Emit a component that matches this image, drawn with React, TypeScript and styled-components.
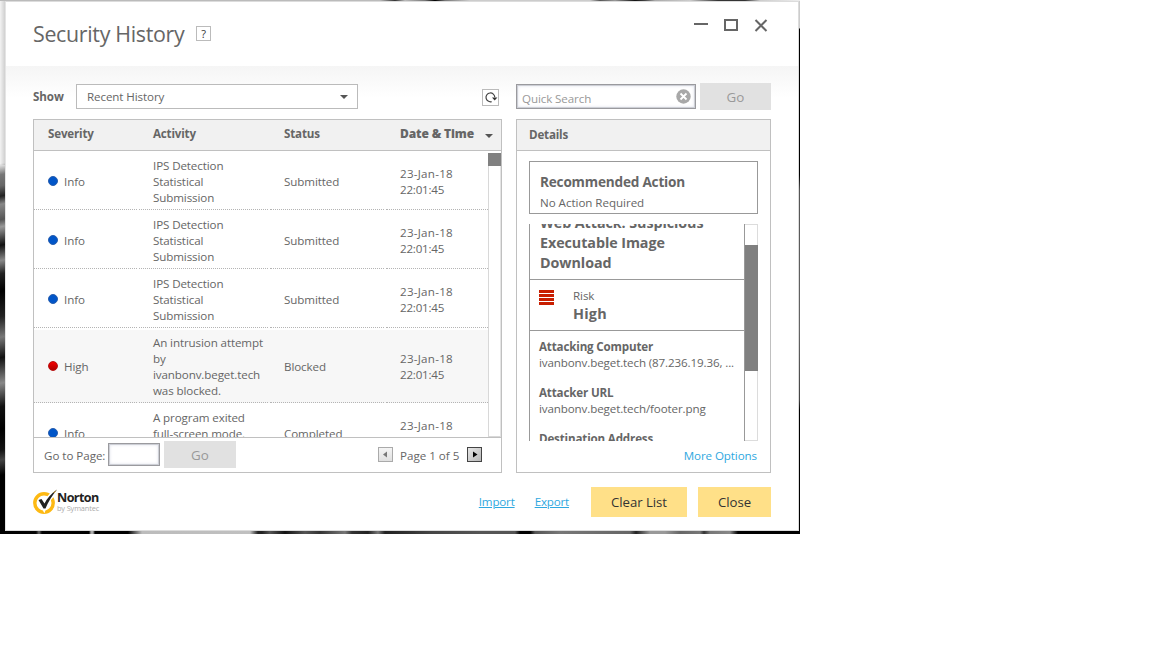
import React from "react";
import styled, { createGlobalStyle, css } from "styled-components";

const Global = createGlobalStyle`
  * { box-sizing: border-box; }
  html, body { margin: 0; background: #fff; }
  body {
    font-family: "Open Sans", "Noto Sans", sans-serif;
    font-size: 11.6px;
    line-height: 16px;
    letter-spacing: -0.1px;
    color: #666;
  }
  button, input { font: inherit; letter-spacing: inherit; color: inherit; margin: 0; border-radius: 0; outline: none; }
`;

const Desktop = styled.div`
  width: 800px;
  height: 534px;
  padding: 1px 1px 3px 5px;
  background:
    linear-gradient(90deg, #bbb 0, #bbb 380px, #333 395px, #bbb 405px, #777 425px, #000 435px, #777 445px, #ccc 470px, #ccc 590px, #555 600px, #999 615px, #111 635px, #444 645px, #aaa 655px, #ccc 690px, #333 718px, #333 745px, #ccc 760px, #eee 800px) 0 0 / 800px 1px no-repeat,
    linear-gradient(180deg, #ccc 0, #ccc 28px, #000 29px, #000 175px, #555 190px, #666 330px, #444 400px, #000 410px, #000 534px) 799px 0 / 1px 531px no-repeat,
    linear-gradient(90deg, transparent 0, rgba(0, 0, 0, 0.14) 5px) 0 0 / 5px 165px no-repeat,
    linear-gradient(168deg, #f2f2f2 0, #f2f2f2 160px, #777 171px, #666 182px, #222 192px, #888 200px, #555 215px, #999 222px, #111 240px, #888 255px, #222 268px, #000 285px, #222 310px, #777 330px, #111 350px, #888 375px, #111 398px, #000 420px, #111 440px, #444 450px, #000 465px, #000 534px) 0 0 / 5px 534px no-repeat,
    linear-gradient(90deg, #000 0, #050505 36px, #666 39px, #020202 42px, #000 89px, #aaa 91px, #aaa 93px, #000 95px, #000 128px, #555 134px, #bcbcbc 142px, #c0c0c0 250px, #222 258px, #222 262px, #555 270px, #111 285px, #555 305px, #333 320px, #777 345px, #333 352px, #222 368px, #777 378px, #222 385px, #333 410px, #444 430px, #555 480px, #555 515px, #000 520px, #000 530px, #555 535px, #777 560px, #666 630px, #222 636px, #999 650px, #999 665px, #666 680px, #777 700px, #333 704px, #777 710px, #888 730px, #000 738px, #000 800px) 0 531px / 800px 3px no-repeat;
`;

const Window = styled.main`
  height: 530px;
  display: flex;
  flex-direction: column;
  background: #fff;
  border: 1px solid #dcdcdc;
  border-left-color: #e4e4e4;
`;

const TitleBar = styled.header`
  height: 64px;
  flex: none;
  display: flex;
  align-items: flex-start;
  padding: 15px 30px 0 27px;
`;

const Title = styled.h1`
  margin: 0;
  padding-top: 1px;
  width: 163px;
  font-size: 21.4px;
  font-weight: 400;
  line-height: 32px;
  letter-spacing: -0.32px;
  white-space: nowrap;
`;

const HelpButton = styled.button`
  width: 15px;
  height: 15px;
  margin-top: 9px;
  padding: 0;
  background: #fff;
  border: 1px solid #bbb;
  color: #333;
  font-size: 11px;
  line-height: 13px;
`;

const WindowControls = styled.div`
  margin-left: auto;
  padding-top: 1px;
  display: flex;
  svg { display: block; }
`;

const Body = styled.div`
  flex: 1;
  padding: 17px 27px 0 27px;
  background: linear-gradient(#f5f5f5, #fff 32px);
`;

const Toolbar = styled.div`
  height: 27px;
  display: flex;
  align-items: center;
`;

const ShowLabel = styled.label`
  width: 43px;
  font-weight: 700;
  white-space: nowrap;
`;

const Select = styled.div`
  width: 282px;
  height: 25px;
  display: flex;
  align-items: center;
  justify-content: space-between;
  padding: 0 9px 0 10px;
  border: 1px solid #bbb;
  background: #fff;
`;

const Caret = styled.span`
  border: 4px solid transparent;
  border-top-color: #555;
  border-bottom: 0;
`;

const RefreshButton = styled.button`
  width: 17px;
  height: 17px;
  margin: 2px 17px 0 124px;
  padding: 0;
  border: 1px solid #bbb;
  background: #fff;
  svg { display: block; }
`;

const inset = css`
  border: 1px solid #9a9a9e;
  box-shadow: inset 0 0 0 1px #cdcfd6, inset 0 0 3px 1px #dfe2ec;
  background: #fff;
`;

const SearchBox = styled.div`
  ${inset}
  width: 180px;
  height: 25px;
  display: flex;
  align-items: center;
  justify-content: space-between;
  padding: 0 4px 0 5px;
  color: #999;
  span { padding-top: 4px; }
`;

const GoButton = styled.button<{ $width: number }>`
  width: ${(p) => p.$width}px;
  height: 27px;
  margin-left: 4px;
  padding: 1px 0 0;
  border: 0;
  background: #e1e1e1;
  color: #999;
  font-size: 13.4px;
  letter-spacing: 0;
`;

const Panels = styled.div`
  height: 354px;
  margin-top: 9px;
  display: grid;
  grid-template-columns: 469px 255px;
  column-gap: 14px;
`;

const Panel = styled.section`
  min-height: 0;
  display: flex;
  flex-direction: column;
  border: 1px solid #c0c0c0;
  background: #fff;
`;

const columns = css`
  display: grid;
  grid-template-columns: 105px 131px 116px 102px;
`;

const PanelHeader = styled.div`
  height: 31px;
  flex: none;
  padding: 7px 0 0 12px;
  border-bottom: 1px solid #c0c0c0;
  background: #f1f1f1;
  font-weight: 700;
  letter-spacing: -0.18px;
`;

const TableHeader = styled(PanelHeader)`
  ${columns}
  padding: 6px 0 0;
  span { padding-left: 14px; white-space: nowrap; }
`;

const SortCell = styled.div`
  display: flex;
  align-items: center;
  height: 16px;
  i { margin: 4px 0 0 14px; }
  b { width: 86px; padding-left: 14px; white-space: nowrap; font-size: 12px; letter-spacing: -0.14px; }
  i { margin-left: 13px; }
`;

const TableArea = styled.div`
  height: 287px;
  display: flex;
  border-bottom: 1px solid #c0c0c0;
`;

const Rows = styled.div`
  width: 454px;
  height: 286px;
  overflow: hidden;
`;

const Row = styled.div<{ $height: number; $shaded?: boolean }>`
  ${columns}
  height: ${(p) => p.$height}px;
  background: ${(p) => (p.$shaded ? "linear-gradient(#fff 2px, #f7f7f7 2px)" : "#fff")};
`;

const Cell = styled.div<{ $ls?: number }>`
  display: flex;
  align-items: center;
  margin-right: 2px;
  padding: 4px 0 0 14px;
  border-bottom: 1px dotted #b4b4b4;
  white-space: pre;
  letter-spacing: ${(p) => p.$ls ?? -0.1}px;
  &:last-child { margin-right: 0; }
`;

const DateText = styled.div`
  letter-spacing: 0.25px;
  span { display: block; }
  span + span { letter-spacing: -0.22px; }
`;

const Dot = styled.i<{ $high?: boolean }>`
  width: 10px;
  height: 10px;
  margin: -3px 6px 0 0;
  border-radius: 50%;
  border: 1px solid ${(p) => (p.$high ? "#b81010" : "#2a5fae")};
  background: ${(p) => (p.$high ? "linear-gradient(#f40000, #b00000)" : "#0055c8")};
`;

const TableScroll = styled.div`
  width: 13px;
  height: 284px;
  margin-top: 2px;
  border: 1px solid #d8d8d8;
  border-top: 0;
  border-right-color: #e4e4e4;
  background: #fff;
  &::before { content: ""; display: block; height: 13px; margin: 0 -1px; background: #808080; }
`;

const Pager = styled.div`
  flex: 1;
  display: flex;
  align-items: center;
  padding: 0 19px 2px 10px;
  > span { padding-top: 3px; white-space: nowrap; letter-spacing: -0.04px; }
  > span:first-child { width: 64px; }
`;

const PageInput = styled.div`
  ${inset}
  width: 52px;
  height: 23px;
`;

const PageButton = styled.button<{ $off?: boolean }>`
  width: 15px;
  height: 15px;
  padding: 0;
  border: 1px solid ${(p) => (p.$off ? "#aaa" : "#444")};
  background: ${(p) => (p.$off ? "linear-gradient(#f4f4f4, #e0e0e0)" : "linear-gradient(135deg, #e6e6e6, #b8b8b8)")};
  svg { display: block; }
`;

const PageNav = styled.div`
  margin-left: auto;
  display: flex;
  align-items: center;
  span { width: 74px; padding: 3px 0 0 7px; letter-spacing: 0; }
`;

const ActionCard = styled.div`
  height: 53px;
  margin: 10px 12px 0;
  padding: 10px 10px 0;
  border: 1px solid #999;
  strong { display: block; font-size: 13.6px; line-height: 20px; letter-spacing: -0.2px; }
  span { display: block; line-height: 16px; padding-top: 3px; letter-spacing: -0.04px; }
`;

const DetailScroll = styled.div`
  height: 217px;
  margin: 10px 12px 0;
  display: flex;
  overflow: hidden;
`;

const DetailContent = styled.div`
  width: 216px;
  height: 217px;
  display: flex;
  flex-direction: column;
  justify-content: flex-end;
  overflow: hidden;
  border: solid #999;
  border-width: 0 1px;
`;

const AttackName = styled.h2`
  margin: 0;
  flex: none;
  height: 67px;
  padding-left: 10px;
  border-bottom: 1px solid #999;
  font-size: 14.3px;
  line-height: 20px;
  letter-spacing: -0.06px;
  white-space: pre;
`;

const RiskRow = styled.div`
  flex: none;
  height: 51px;
  display: flex;
  padding: 8px 0 0 9px;
  border-bottom: 1px solid #999;
  div { padding-left: 19px; }
  span { display: block; }
  strong { display: block; font-size: 14.4px; line-height: 20px; letter-spacing: 0.2px; }
`;

const RiskBars = styled.i`
  width: 15px;
  height: 15px;
  margin-top: 2px;
  background: repeating-linear-gradient(#c81e00 0 3px, #fff 3px 4px);
`;

const Facts = styled.dl`
  margin: 0;
  flex: none;
  height: 110px;
  padding: 8px 0 0 9px;
  overflow: hidden;
  white-space: nowrap;
  dt { font-weight: 700; letter-spacing: -0.16px; }
  dd { margin: 0 0 14px; letter-spacing: -0.12px; }
`;

const DetailTrack = styled.div`
  width: 13px;
  border: solid #dcdcdc;
  border-width: 1px 1px 1px 0;
  &::before { content: ""; display: block; width: 13px; height: 126px; margin-top: 20px; background: #808080; }
`;

const MoreOptions = styled.a`
  align-self: flex-end;
  margin: 7px 13px 0 0;
  color: #2fa8e0;
`;

const Footer = styled.footer`
  height: 30px;
  margin-top: 14px;
  display: flex;
  align-items: center;
`;

const Logo = styled.div`
  display: flex;
  align-items: flex-start;
  svg { display: block; }
`;

const LogoText = styled.div`
  margin: 4px 0 0 -4px;
  white-space: nowrap;
  strong { display: block; color: #222; font-size: 12.6px; line-height: 12px; letter-spacing: -0.6px; }
  span { display: block; color: #aaa; font-size: 7.4px; line-height: 8px; letter-spacing: -0.15px; }
`;

const TextLinks = styled.nav`
  margin-left: auto;
  display: flex;
  gap: 20px;
  margin-right: 22px;
  a { color: #2fa8e0; text-decoration: underline; letter-spacing: -0.18px; }
`;

const YellowButton = styled.button<{ $width: number }>`
  width: ${(p) => p.$width}px;
  height: 30px;
  padding: 0;
  border: 0;
  background: #ffe088;
  color: #333;
  font-size: 13.2px;
  letter-spacing: -0.05px;
  & + & { margin-left: 11px; }
`;

const rows = [
  { level: "Info", text: "IPS Detection\nStatistical\nSubmission", status: "Submitted", height: 59 },
  { level: "Info", text: "IPS Detection\nStatistical\nSubmission", status: "Submitted", height: 59 },
  { level: "Info", text: "IPS Detection\nStatistical\nSubmission", status: "Submitted", height: 59 },
  { level: "High", text: "An intrusion attempt\nby\nivanbonv.beget.tech\nwas blocked.", status: "Blocked", height: 75 },
  { level: "Info", text: "A program exited\nfull-screen mode.\n ", status: "Completed", height: 59 },
];

export default function App() {
  return (
    <>
      <Global />
      <Desktop>
        <Window>
          <TitleBar>
            <Title>Security History</Title>
            <HelpButton>?</HelpButton>
            <WindowControls>
              <svg width="74" height="15" viewBox="0 0 74 15" fill="none" stroke="#666" strokeWidth="2">
                <path d="M0 6H14M61.5 2L72.5 13M72.5 2L61.5 13" />
                <path d="M31 2H43V12H31Z" />
              </svg>
            </WindowControls>
          </TitleBar>
          <Body>
            <Toolbar>
              <ShowLabel>Show</ShowLabel>
              <Select>
                Recent History
                <Caret />
              </Select>
              <RefreshButton>
                <svg width="15" height="15" viewBox="0 0 15 15" fill="none">
                  <path d="M8.6 11.6A4.4 4.4 0 1 1 11.8 7.3" stroke="#444" strokeWidth="1.2" />
                  <path d="M9 7.5H14.4L11.7 10.6Z" fill="#333" />
                </svg>
              </RefreshButton>
              <SearchBox>
                <span>Quick Search</span>
                <svg width="15" height="15" viewBox="0 0 15 15">
                  <circle cx="7.5" cy="7.5" r="7.2" fill="#a8a8a8" />
                  <path d="M4.5 4.5L10.5 10.5M10.5 4.5L4.5 10.5" stroke="#fff" strokeWidth="1.8" />
                </svg>
              </SearchBox>
              <GoButton $width={71}>Go</GoButton>
            </Toolbar>
            <Panels>
              <Panel>
                <TableHeader>
                  <span>Severity</span>
                  <span>Activity</span>
                  <span>Status</span>
                  <SortCell>
                    <b>Date &amp; Time</b>
                    <Caret as="i" />
                  </SortCell>
                </TableHeader>
                <TableArea>
                  <Rows>
                    {rows.map((r, i) => (
                      <Row key={i} $height={r.height} $shaded={r.level === "High"}>
                        <Cell>
                          <Dot $high={r.level === "High"} />
                          {r.level}
                        </Cell>
                        <Cell $ls={-0.11}>{r.text}</Cell>
                        <Cell>{r.status}</Cell>
                        <Cell>
                          <DateText>
                            <span>23-Jan-18</span>
                            <span>22:01:45</span>
                          </DateText>
                        </Cell>
                      </Row>
                    ))}
                  </Rows>
                  <TableScroll />
                </TableArea>
                <Pager>
                  <span>Go to Page:</span>
                  <PageInput />
                  <GoButton $width={72}>Go</GoButton>
                  <PageNav>
                    <PageButton $off>
                      <svg width="13" height="13" viewBox="0 0 13 13"><path d="M8 3.5V9.5L4 6.5Z" fill="#777" /></svg>
                    </PageButton>
                    <span>Page 1 of 5</span>
                    <PageButton>
                      <svg width="13" height="13" viewBox="0 0 13 13"><path d="M5 3.5V9.5L9.5 6.5Z" fill="#000" /></svg>
                    </PageButton>
                  </PageNav>
                </Pager>
              </Panel>
              <Panel>
                <PanelHeader>Details</PanelHeader>
                <ActionCard>
                  <strong>Recommended Action</strong>
                  <span>No Action Required</span>
                </ActionCard>
                <DetailScroll>
                  <DetailContent>
                    <AttackName>{"Web Attack: Suspicious\nExecutable Image\nDownload"}</AttackName>
                    <RiskRow>
                      <RiskBars />
                      <div>
                        <span>Risk</span>
                        <strong>High</strong>
                      </div>
                    </RiskRow>
                    <Facts>
                      <dt>Attacking Computer</dt>
                      <dd>ivanbonv.beget.tech (87.236.19.36, ...</dd>
                      <dt>Attacker URL</dt>
                      <dd>ivanbonv.beget.tech/footer.png</dd>
                      <dt>Destination Address</dt>
                    </Facts>
                  </DetailContent>
                  <DetailTrack />
                </DetailScroll>
                <MoreOptions>More Options</MoreOptions>
              </Panel>
            </Panels>
            <Footer>
              <Logo>
                <svg width="28" height="28" viewBox="0 0 28 28" fill="none">
                  <circle cx="11" cy="15" r="9.2" stroke="#fdb913" strokeWidth="3.4" />
                  <path d="M7 12.5L11 19.5C14 12 18 7 24 2" stroke="#fff" strokeWidth="5" />
                  <path d="M5.5 12L8.5 11L11.5 15.5C14 10.5 18 5.5 24 1.5C19 8 15 14 12.5 20.5H10.5Z" fill="#222" />
                  <path d="M20 5L24 1.5L21.5 5Z" fill="#c9932b" />
                </svg>
                <LogoText>
                  <strong>Norton</strong>
                  <span>by Symantec</span>
                </LogoText>
              </Logo>
              <TextLinks>
                <a>Import</a>
                <a>Export</a>
              </TextLinks>
              <YellowButton $width={96}>Clear List</YellowButton>
              <YellowButton $width={73}>Close</YellowButton>
            </Footer>
          </Body>
        </Window>
      </Desktop>
    </>
  );
}
